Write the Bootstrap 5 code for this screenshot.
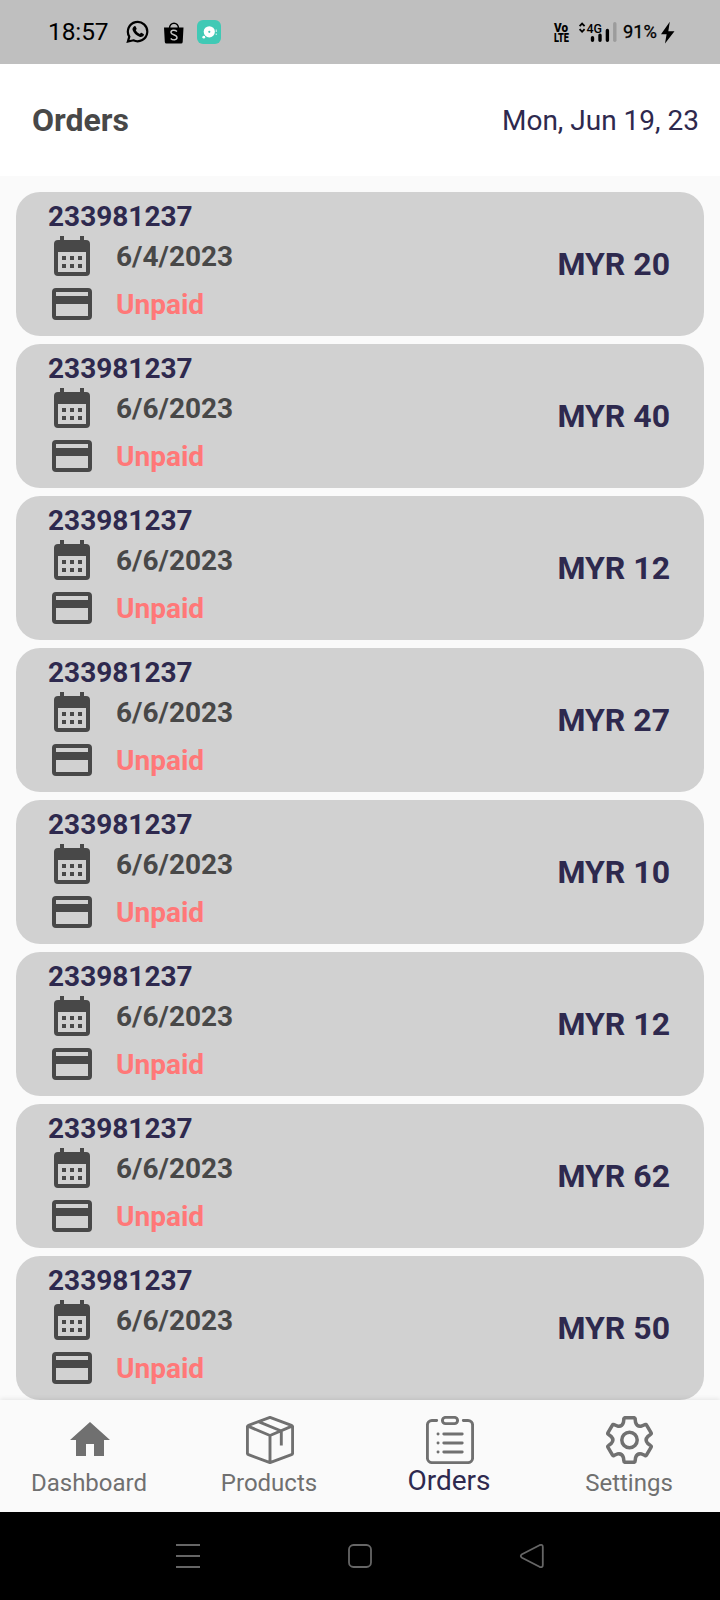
<!DOCTYPE html>
<html lang="en">
<head>
<meta charset="utf-8">
<meta name="viewport" content="width=device-width, initial-scale=1">
<title>Orders</title>
<link href="https://cdn.jsdelivr.net/npm/bootstrap@5.3.0/dist/css/bootstrap.min.css" rel="stylesheet">
<script src="https://cdn.jsdelivr.net/npm/bootstrap@5.3.0/dist/js/bootstrap.bundle.min.js"></script>
<style>
  body { font-family: Roboto, "Noto Sans", sans-serif; background: #fafafa; width: 720px; height: 1600px; overflow: hidden; color: #484848; }
  svg { display: block; flex: none; }
  .navy { color: #2e294e; }
  .statusbar { height: 64px; background: #bfbfbf; color: #000; padding-left: 48px; padding-right: 45px; }
  .clock { font-size: 24.5px; line-height: 30px; letter-spacing: -.1px; width: 78px; }
  .bag-icon { margin: 1px 13px 0 14px; }
  .topbar { height: 112px; padding: 0 21px 0 32px; }
  .page-title { font-size: 32px; line-height: 36px; font-weight: 700; }
  .today { font-size: 28px; line-height: 33px; margin-top: 1px; }
  .order-list { height: 1224px; padding: 16px 16px 0; }
  .order { height: 144px; border-radius: 24px; background: #d1d1d1; padding: 8px 34px 8px 32px; font-size: 28px; line-height: 33px; font-weight: 700; }
  .order-id { height: 32px; }
  .order-row { height: 48px; gap: 20px; }
  .order-row span { margin-top: 1px; }
  .unpaid { color: #ff7878; }
  .amount { font-size: 32px; line-height: 36px; }
  .tabbar { height: 112px; background: #fafafa; color: #707070; padding-top: 16px; box-shadow: 0 -1px 5px rgba(0,0,0,.09); position: relative; }
  .tab-label { font-size: 24px; line-height: 28px; margin: 5px 2px 0 0; }
  .tab-label.current { font-size: 28px; line-height: 33px; margin-top: 0; }
  .sysnav { height: 88px; background: #000; }
</style>
</head>
<body>
<svg width="0" height="0" class="position-absolute" aria-hidden="true">
  <symbol id="i-cal" viewBox="0 0 24 24"><path fill="currentColor" fill-rule="evenodd" d="M6 2h2v2h8V2h2v2h1a2 2 0 0 1 2 2v14a2 2 0 0 1-2 2H5a2 2 0 0 1-2-2V6a2 2 0 0 1 2-2h1zM5 10v10h14V10zM7 12h2v2H7zM11 12h2v2h-2zM15 12h2v2h-2zM7 16h2v2H7zM11 16h2v2h-2zM15 16h2v2h-2z"/></symbol>
  <symbol id="i-card" viewBox="0 0 24 24"><path fill="currentColor" fill-rule="evenodd" d="M20 4H4a2 2 0 0 0-2 2v12a2 2 0 0 0 2 2h16a2 2 0 0 0 2-2V6a2 2 0 0 0-2-2zM4 6h16v2H4zM4 12h16v6H4z"/></symbol>
</svg>

<header class="statusbar d-flex align-items-center">
  <span class="clock">18:57</span>
  <svg width="24" height="24" viewBox="0 0 24 24" fill="none" stroke="#000"><path stroke-width="2.200" d="M1.900 21.600l1.400-5A9.700 9.700 0 1 1 7.400 20.300z"/><path fill="#000" stroke="none" d="M8.300 6.300c.6-.4 1.100-.3 1.400.3l.9 2c.2.5-.3 1-.8 1.600 1 1.800 2.200 3 4.100 3.800.6-.7 1-1.400 1.500-1.200l2.200 1.100c.5.3.3 1.100 0 1.700-.8 1.400-2.500 1.700-4.100 1.200-3.400-1.100-6-3.800-6.900-6.700-.4-1.500.3-3 1.700-3.800z"/></svg>
  <svg class="bag-icon" width="20" height="22" viewBox="0 0 20 22"><path d="M5.500 6.500C5.500-.6 14.500-.6 14.500 6.500" fill="none" stroke="#000" stroke-width="1.500"/><path d="M0 5.500h19.500l-.8 14.500a1.700 1.700 0 0 1-1.700 1.500H2.500A1.700 1.700 0 0 1 .8 20z"/><path d="M13 9.500C10.500 7.400 6.700 8 7 10.600c.3 2.400 6 2 6 5 0 2.700-4.200 2.900-6.300.8" fill="none" stroke="#c8c8c8" stroke-width="1.400"/></svg>
  <svg width="24" height="24" viewBox="0 0 24 24"><rect width="24" height="24" rx="6" fill="#40c9b5"/><circle cx="12.300" cy="11.800" r="5.600" fill="#fff"/><circle cx="12.300" cy="11.800" r="1.100" fill="#40c9b5"/><circle cx="6.800" cy="17.200" r="1.400" fill="#fff"/><path d="M19.300 9.500v2.500M19.300 13.500v1.500" stroke="#c5eee7" stroke-width="1.200"/></svg>
  <svg class="ms-auto overflow-visible" width="122" height="24" viewBox="0 0 122 24" font-family="Roboto, sans-serif">
    <g font-weight="900" font-size="12.500"><text x="1" y="12" textLength="14" lengthAdjust="spacingAndGlyphs">Vo</text><text x="1" y="22" textLength="15" lengthAdjust="spacingAndGlyphs">LTE</text></g>
    <path d="M26.600 6.200l2.500-2.600 2.500 2.600M26.600 9.200l2.500 2.600 2.500-2.600" fill="none" stroke="#000" stroke-width="1.800"/>
    <text x="33.500" y="12.600" font-size="13.500" font-weight="500" textLength="15.500" lengthAdjust="spacingAndGlyphs">4G</text>
    <g stroke-width="3.400" stroke-linecap="round" stroke="#000"><path d="M39.500 17.700v2.500M47 15.200v5M54.400 10.400v9.800"/><path stroke="#9c9c9c" d="M61.800 3.700v16.500"/></g>
    <text x="70" y="18" font-size="18" font-weight="400" stroke="#000" stroke-width=".3" textLength="34" lengthAdjust="spacingAndGlyphs">91%</text>
    <path d="M116.800 1.700L108 14.300h5.600L112 23.500l9.500-12.200h-6.200z"/>
  </svg>
</header>

<div class="topbar d-flex align-items-center justify-content-between bg-white">
  <h1 class="page-title m-0">Orders</h1>
  <span class="today navy">Mon, Jun 19, 23</span>
</div>

<main class="order-list d-flex flex-column gap-2" id="orders"></main>

<nav class="tabbar d-flex text-center">
  <div class="col-3 d-flex flex-column align-items-center">
    <svg width="48" height="48" viewBox="0 0 24 24"><path fill="currentColor" d="M10 20v-6h4v6h5v-8h3L12 3 2 12h3v8z"/></svg>
    <span class="tab-label">Dashboard</span>
  </div>
  <div class="col-3 d-flex flex-column align-items-center">
    <svg width="48" height="48" viewBox="0 0 48 48" fill="none" stroke="currentColor" stroke-width="2.900" stroke-linejoin="round"><path d="M24 1.400L45.500 9.300Q46.600 9.700 46.600 11v26Q46.600 38.300 45.500 38.700L24 46.600 2.500 38.700Q1.400 38.300 1.400 37V11Q1.400 9.700 2.500 9.300zM2 10.200L24 19.500l22-9.300M24 19.500V46.600M13 5.800L35.300 15v14.500"/></svg>
    <span class="tab-label">Products</span>
  </div>
  <div class="col-3 d-flex flex-column align-items-center">
    <svg width="48" height="48" viewBox="0 0 48 48" fill="none" stroke="currentColor" stroke-width="2.900" stroke-linecap="round"><path d="M10.700 4.500H6A4.600 4.600 0 0 0 1.400 9v33A4.600 4.600 0 0 0 6 46.600h36a4.600 4.600 0 0 0 4.600-4.600V9A4.600 4.600 0 0 0 42 4.500h-4.700M17.800 18h18.400M17.800 27h18.400M17.800 36h18.400M12 18h.1M12 27h.1M12 36h.1"/><rect x="16.400" y="1.400" width="15.200" height="6.200" rx="3.100"/></svg>
    <span class="tab-label current navy">Orders</span>
  </div>
  <div class="col-3 d-flex flex-column align-items-center">
    <svg width="48" height="48" viewBox="0 0 48 48" fill="none" stroke="currentColor" stroke-width="3.500" stroke-linejoin="round"><circle cx="23.500" cy="24" r="7.700"/><path id="gear"/></svg>
    <span class="tab-label">Settings</span>
  </div>
</nav>

<footer class="sysnav d-flex">
  <svg width="720" height="88" viewBox="0 0 720 88" fill="none" stroke="#666" stroke-width="1.800"><path d="M176 33h24M176 44h24M176 55h24"/><rect x="349" y="33" width="22" height="22" rx="4.500"/><path stroke-linejoin="round" d="M522 42.200L539.500 33.200Q542.800 31.800 542.800 35V53Q542.800 56.200 539.500 54.800L522 45.800Q519.500 44 522 42.200z"/></svg>
</footer>

<script>
  const orders = [["6/4/2023", 20], ["6/6/2023", 40], ["6/6/2023", 12], ["6/6/2023", 27], ["6/6/2023", 10], ["6/6/2023", 12], ["6/6/2023", 62], ["6/6/2023", 50]];
  document.getElementById("orders").innerHTML = orders.map(([date, sum]) => `
    <article class="order d-flex align-items-center justify-content-between">
      <div>
        <div class="order-id navy">233981237</div>
        <div class="order-row d-flex align-items-center"><svg width="48" height="48"><use href="#i-cal"/></svg><span>${date}</span></div>
        <div class="order-row d-flex align-items-center"><svg width="48" height="48"><use href="#i-card"/></svg><span class="unpaid">Unpaid</span></div>
      </div>
      <div class="amount navy">MYR ${sum}</div>
    </article>`).join("");

  // Six-tooth gear outline: flat tooth tips joined by concave valleys
  const pt = (a, r) => { const t = a * Math.PI / 180; return (23.5 + r * Math.sin(t)).toFixed(1) + " " + (24 - r * Math.cos(t)).toFixed(1); };
  let d = "";
  for (let k = 0; k < 6; k++) {
    const a = k * 60;
    d += (k ? "L" : "M") + pt(a - 15, 21.8) + "Q" + pt(a - 14, 23) + " " + pt(a - 11, 22.7) + "L" + pt(a + 11, 22.7) + "Q" + pt(a + 14, 23) + " " + pt(a + 15, 21.8) + "L" + pt(a + 19, 18.6) + "Q" + pt(a + 30, 15) + " " + pt(a + 41, 18.6);
  }
  document.getElementById("gear").setAttribute("d", d + "Z");
</script>
</body>
</html>
